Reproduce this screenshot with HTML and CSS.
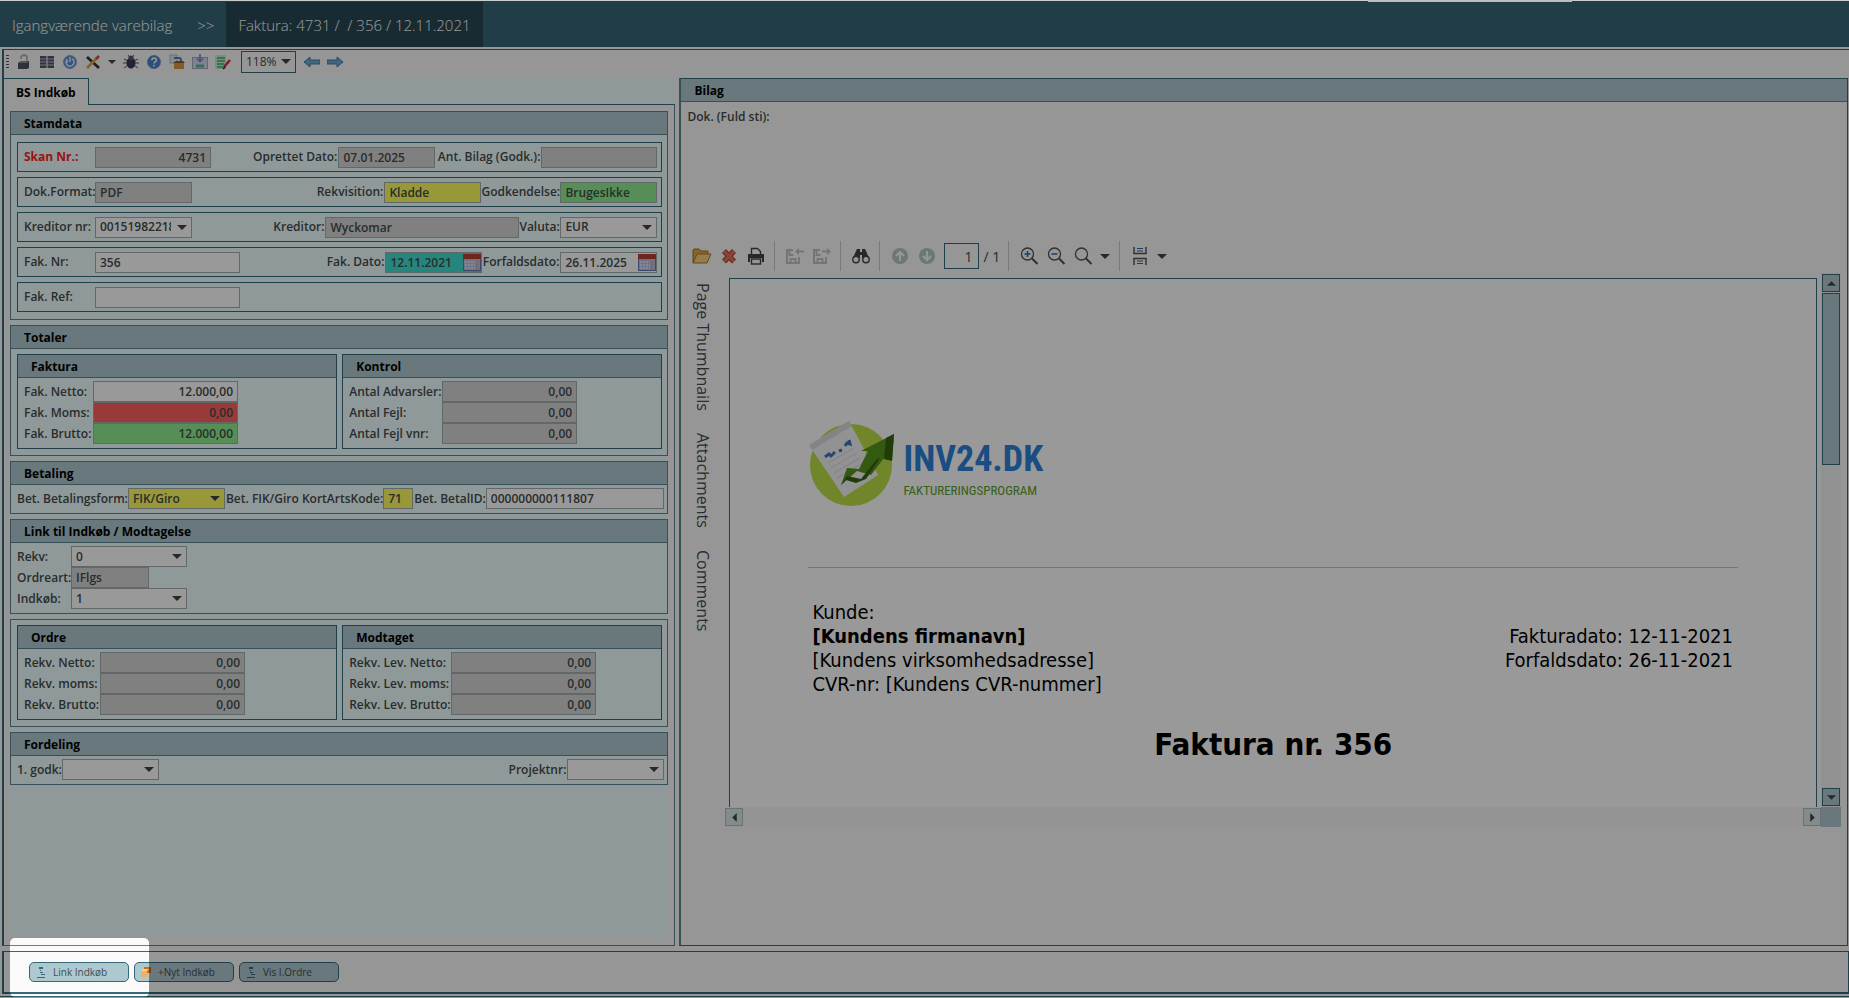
FILE: index.html
```html
<!DOCTYPE html>
<html lang="da">
<head>
<meta charset="utf-8">
<title>Faktura 4731</title>
<link rel="stylesheet" href="styles.css">
</head>
<body>
<div class="window-edge"><span class="window-notch"></span></div>
<nav class="crumbs">
  <a href="#" class="crumb">Igangværende varebilag</a>
  <span class="crumb-sep">&gt;&gt;</span>
  <a href="#" class="crumb crumb-active">Faktura: 4731 /&nbsp; / 356 / 12.11.2021</a>
</nav>

<main class="frame">
  <div class="toolbar">
    <span class="grip"></span>
    <button class="tool" aria-label="Lås op"><svg viewBox="0 0 16 16"><path d="M5 5V4a3 3 0 0 1 6 0v5" fill="none" stroke="#b4b4b4" stroke-width="1.800"/><path d="M2 9l3-2h8v7l-2 1H2z" fill="#50505f"/><path d="M2 9l3-2h8l-2 2z" fill="#8e8e9c"/></svg></button>
    <button class="tool" aria-label="Kolonner"><svg viewBox="0 0 16 16"><rect x="1" y="2" width="6.500" height="12" fill="#56566a"/><rect x="8.500" y="2" width="6.500" height="12" fill="#56566a"/><path d="M1 5h14M1 8h14M1 11h14" stroke="#d8d8e2" stroke-width=".8"/></svg></button>
    <button class="tool" aria-label="Opdater"><svg viewBox="0 0 16 16"><circle cx="8" cy="8" r="6.500" fill="#5c8cd0" stroke="#8ca8d4"/><path d="M5 5.500a4 4 0 1 0 5-.8M5 5v4M8 3v5" fill="none" stroke="#e8f2ff" stroke-width="1.500"/></svg></button>
    <button class="tool" aria-label="Værktøjer"><svg viewBox="0 0 16 16"><path d="M2 3l12 11" stroke="#343446" stroke-width="2.800"/><path d="M2 14L12 4" stroke="#d9a53c" stroke-width="2.600"/><path d="M11 5l3-3" stroke="#d8503c" stroke-width="2.600"/></svg></button>
    <button class="tool tool-caret" aria-label="Flere værktøjer"><span class="caret"></span></button>
    <button class="tool" aria-label="Fejlfinding"><svg viewBox="0 0 16 16"><path d="M1 5l4 2M15 5l-4 2M0 9h16M1 14l4-3M15 14l-4-3M5 1l2 3M11 1L9 4" stroke="#55556a"/><ellipse cx="8" cy="9" rx="4.500" ry="5.500" fill="#3c3c50"/><circle cx="8" cy="4" r="2.500" fill="#55556a"/></svg></button>
    <button class="tool" aria-label="Hjælp"><svg viewBox="0 0 16 16"><circle cx="8" cy="8" r="6.600" fill="#4c80cc" stroke="#84a4d4"/><path d="M5.800 6.200c0-3 4.600-2.800 4.600 0 0 1.500-2.300 1.500-2.300 3.200M8 10.800v1.800" fill="none" stroke="#fff" stroke-width="1.600"/></svg></button>
    <button class="tool" aria-label="Pak"><svg viewBox="0 0 16 16"><rect x="1" y="1" width="7" height="8" fill="#dfe8f4" stroke="#b4bccc"/><path d="M5 4h5a2 2 0 0 1 2 2v2" fill="none" stroke="#4f7fb8" stroke-width="2"/><path d="M5 9h10v6H5z" fill="#d89c40"/><path d="M4 9l3-2h7l2 2z" fill="#8c5a1c"/></svg></button>
    <button class="tool" aria-label="Gem"><svg viewBox="0 0 16 16"><rect x=".5" y="3.500" width="15" height="11" fill="#cfdcee" stroke="#a8a8c8"/><path d="M4 12h8" stroke="#60b498" stroke-width="3"/><path d="M8 0v7M5 4.500l3 3 3-3" fill="none" stroke="#8c80b8" stroke-width="1.600"/></svg></button>
    <button class="tool" aria-label="Rediger"><svg viewBox="0 0 16 16"><rect x="0" y="1" width="11" height="14" fill="#c6ecde"/><path d="M2 4h8M2 7h8M2 10h7M2 13h6" stroke="#3cb464" stroke-width="1.600"/><path d="M9 13L15 6" stroke="#d83048" stroke-width="2.600"/><path d="M8 15l2-2" stroke="#222" stroke-width="1.500"/></svg></button>
    <span class="select zoom-select"><select aria-label="Zoom"><option>118%</option></select></span>
    <button class="tool" aria-label="Tilbage"><svg viewBox="0 0 16 16"><path d="M0 8l6-5v3h10v4H6v3z" fill="#6cacd4" stroke="#4878a4"/></svg></button>
    <button class="tool" aria-label="Frem"><svg viewBox="0 0 16 16"><path d="M16 8l-6-5v3H0v4h10v3z" fill="#6cacd4" stroke="#4878a4"/></svg></button>
  </div>

  <div class="panes">
    <section class="pane-left">
      <div class="tabs"><button class="tab">BS Indkøb</button></div>
      <form class="sheet">
        <div class="cards">
          <section class="card">
            <h2 class="card-head">Stamdata</h2>
            <div class="rows">
              <div class="row">
                <label class="lead required" for="skan">Skan Nr.:</label><input id="skan" class="f116 ro num" value="4731" readonly>
                <label class="push" for="opr">Oprettet Dato:</label><input id="opr" class="f97 ro" value="07.01.2025" readonly>
                <label class="l106" for="ant">Ant. Bilag (Godk.):</label><input id="ant" class="f116 ro" readonly>
              </div>
              <div class="row">
                <label class="lead" for="fmt">Dok.Format:</label><input id="fmt" class="f97 ro" value="PDF" readonly>
                <label class="push" for="rek">Rekvisition:</label><input id="rek" class="f97 yellow" value="Kladde">
                <label class="l79" for="godk">Godkendelse:</label><input id="godk" class="f97 green" value="BrugesIkke">
              </div>
              <div class="row">
                <label class="lead" for="knr">Kreditor nr:</label><span class="select f97"><select id="knr"><option>00151982218</option></select></span>
                <label class="push" for="kre">Kreditor:</label><input id="kre" class="f194 ro" value="Wyckomar" readonly>
                <label class="l41" for="val">Valuta:</label><span class="select f97"><select id="val"><option>EUR</option></select></span>
              </div>
              <div class="row">
                <label class="lead" for="fnr">Fak. Nr:</label><input id="fnr" class="f145" value="356">
                <label class="push" for="fdato">Fak. Dato:</label><span class="date f97"><input id="fdato" class="teal" value="12.11.2021"><button type="button" class="cal" aria-label="Vælg fakturadato"><svg viewBox="0 0 18 17"><rect x=".5" y=".5" width="17" height="16" fill="#b8c0e0" stroke="#6878b4"/><rect width="18" height="5" fill="#b83c34"/><path d="M2 8h10M2 11h10M2 14h10" stroke="#e0e4f8" stroke-width="2" stroke-dasharray="2 1"/><path d="M14 7v8" stroke="#e8a090" stroke-width="2" stroke-dasharray="2 1"/></svg></button></span>
                <label class="l78" for="forf">Forfaldsdato:</label><span class="date f97"><input id="forf" value="26.11.2025"><button type="button" class="cal" aria-label="Vælg forfaldsdato"><svg viewBox="0 0 18 17"><rect x=".5" y=".5" width="17" height="16" fill="#b8c0e0" stroke="#6878b4"/><rect width="18" height="5" fill="#b83c34"/><path d="M2 8h10M2 11h10M2 14h10" stroke="#e0e4f8" stroke-width="2" stroke-dasharray="2 1"/><path d="M14 7v8" stroke="#e8a090" stroke-width="2" stroke-dasharray="2 1"/></svg></button></span>
              </div>
              <div class="row">
                <label class="lead" for="fref">Fak. Ref:</label><input id="fref" class="f145">
              </div>
            </div>
          </section>

          <section class="card">
            <h2 class="card-head">Totaler</h2>
            <div class="pair">
              <section class="card">
                <h3 class="card-head">Faktura</h3>
                <div class="stack cols-faktura">
                  <label for="fn">Fak. Netto:</label><input id="fn" class="f145 num" value="12.000,00">
                  <label for="fm">Fak. Moms:</label><input id="fm" class="f145 num red" value="0,00">
                  <label for="fb">Fak. Brutto:</label><input id="fb" class="f145 num green" value="12.000,00">
                </div>
              </section>
              <section class="card">
                <h3 class="card-head">Kontrol</h3>
                <div class="stack cols-kontrol">
                  <label for="aa">Antal Advarsler:</label><input id="aa" class="f135 ro num" value="0,00" readonly>
                  <label for="af">Antal Fejl:</label><input id="af" class="f135 ro num" value="0,00" readonly>
                  <label for="av">Antal Fejl vnr:</label><input id="av" class="f135 ro num" value="0,00" readonly>
                </div>
              </section>
            </div>
          </section>

          <section class="card">
            <h2 class="card-head">Betaling</h2>
            <div class="line">
              <label for="bf">Bet. Betalingsform:</label><span class="select f97"><select id="bf" class="yellow"><option>FIK/Giro</option></select></span>
              <label class="next" for="bk">Bet. FIK/Giro KortArtsKode:</label><input id="bk" class="f30 yellow" value="71">
              <label class="next" for="bi">Bet. BetalID:</label><input id="bi" class="grow" value="000000000111807">
            </div>
          </section>

          <section class="card">
            <h2 class="card-head">Link til Indkøb / Modtagelse</h2>
            <div class="stack cols-link">
              <label for="rv">Rekv:</label><span class="select f116"><select id="rv"><option>0</option></select></span>
              <label for="oa">Ordreart:</label><input id="oa" class="f78 ro" value="IFlgs" readonly>
              <label for="ik">Indkøb:</label><span class="select f116"><select id="ik"><option>1</option></select></span>
            </div>
          </section>

          <section class="card">
            <div class="pair">
              <section class="card">
                <h3 class="card-head">Ordre</h3>
                <div class="stack cols-ordre">
                  <label for="rn">Rekv. Netto:</label><input id="rn" class="f145 ro num" value="0,00" readonly>
                  <label for="rm">Rekv. moms:</label><input id="rm" class="f145 ro num" value="0,00" readonly>
                  <label for="rb">Rekv. Brutto:</label><input id="rb" class="f145 ro num" value="0,00" readonly>
                </div>
              </section>
              <section class="card">
                <h3 class="card-head">Modtaget</h3>
                <div class="stack cols-modtaget">
                  <label for="ln">Rekv. Lev. Netto:</label><input id="ln" class="f145 ro num" value="0,00" readonly>
                  <label for="lm">Rekv. Lev. moms:</label><input id="lm" class="f145 ro num" value="0,00" readonly>
                  <label for="lb">Rekv. Lev. Brutto:</label><input id="lb" class="f145 ro num" value="0,00" readonly>
                </div>
              </section>
            </div>
          </section>

          <section class="card">
            <h2 class="card-head">Fordeling</h2>
            <div class="line">
              <label for="g1">1. godk:</label><span class="select f97"><select id="g1"><option></option></select></span>
              <label class="push" for="pn">Projektnr:</label><span class="select f97"><select id="pn"><option></option></select></span>
            </div>
          </section>
        </div>
      </form>
    </section>

    <section class="pane-right">
      <h2 class="card-head">Bilag</h2>
      <p class="doc-path">Dok. (Fuld sti):</p>
      <div class="viewer-tools">
        <button class="vt" aria-label="Åbn"><svg viewBox="0 0 20 18"><path d="M1 16V3l1-1h5l2 2h7v3" fill="#dca64c" stroke="#a87020"/><path d="M1 16L5 7h14l-4 9z" fill="#f8cf80" stroke="#b07828"/></svg></button>
        <button class="vt" aria-label="Luk"><svg viewBox="0 0 20 18"><path d="M5 4l10 10.500M15 4L5 14.500" stroke="#a83c30" stroke-width="5.500"/><path d="M5 4l10 10.500M15 4L5 14.500" stroke="#e8705c" stroke-width="3.500"/></svg></button>
        <button class="vt" aria-label="Udskriv"><svg viewBox="0 0 20 18"><path d="M5.500 7V1.500h6l3 3V7" fill="#fafafa" stroke="#444" stroke-width="1.400"/><path d="M2 7h16v8h-2v-4H4v4H2z" fill="#444"/><rect x="5.500" y="12" width="9" height="5" fill="#fafafa" stroke="#444" stroke-width="1.400"/></svg></button>
        <span class="vsep"></span>
        <button class="vt" aria-label="Importer"><svg viewBox="0 0 20 18"><path d="M8 3H2v13h12v-6M4.500 3v5h4M5.500 16v-4h5v4" fill="none" stroke="#c4c4c4" stroke-width="2"/><path d="M10 4.500l4-3.500v2.500h5v2h-5V8z" fill="#b4c8c4"/></svg></button>
        <button class="vt" aria-label="Eksporter"><svg viewBox="0 0 20 18"><path d="M8 3H2v13h12v-6M4.500 3v5h4M5.500 16v-4h5v4" fill="none" stroke="#c4c4c4" stroke-width="2"/><path d="M19 4.500L15 1v2.500h-5v2h5V8z" fill="#b4c8c4"/></svg></button>
        <span class="vsep"></span>
        <button class="vt" aria-label="Søg"><svg viewBox="0 0 20 18"><path d="M5 4l1-2h3v9H2zM15 4l-1-2h-3v9h7z" fill="#444"/><rect x="8" y="5" width="4" height="3" fill="#444"/><circle cx="5" cy="12.500" r="3.200" fill="#fafafa" stroke="#444" stroke-width="1.400"/><circle cx="15" cy="12.500" r="3.200" fill="#fafafa" stroke="#444" stroke-width="1.400"/></svg></button>
        <span class="vsep"></span>
        <button class="vt" aria-label="Forrige side"><svg viewBox="0 0 20 18"><circle cx="10" cy="9" r="8" fill="#b4c8c4"/><path d="M10 14V5M6 9l4-4 4 4" fill="none" stroke="#fafafa" stroke-width="2"/></svg></button>
        <button class="vt" aria-label="Næste side"><svg viewBox="0 0 20 18"><circle cx="10" cy="9" r="8" fill="#b4c8c4"/><path d="M10 4v9M6 9l4 4 4-4" fill="none" stroke="#fafafa" stroke-width="2"/></svg></button>
        <input class="page-no" aria-label="Side" value="1"><span class="page-total">/ 1</span>
        <span class="vsep"></span>
        <button class="vt" aria-label="Zoom ind"><svg viewBox="0 0 20 18"><circle cx="8.500" cy="7" r="6" fill="none" stroke="#505050" stroke-width="1.300"/><path d="M13 11.500l5.500 5.500" stroke="#505050" stroke-width="2"/><path d="M5.500 7h6M8.500 4v6" stroke="#2c64ac" stroke-width="1.500"/></svg></button>
        <button class="vt" aria-label="Zoom ud"><svg viewBox="0 0 20 18"><circle cx="8.500" cy="7" r="6" fill="none" stroke="#505050" stroke-width="1.300"/><path d="M13 11.500l5.500 5.500" stroke="#505050" stroke-width="2"/><path d="M5.500 7h6" stroke="#2c64ac" stroke-width="1.500"/></svg></button>
        <button class="vt" aria-label="Zoom"><svg viewBox="0 0 20 18"><circle cx="8.500" cy="7" r="6" fill="none" stroke="#505050" stroke-width="1.300"/><path d="M13 11.500l5.500 5.500" stroke="#505050" stroke-width="2"/></svg></button>
        <button class="vt-caret" aria-label="Zoomniveau"><span class="caret"></span></button>
        <span class="vsep"></span>
        <button class="vt" aria-label="Sidevisning"><svg viewBox="0 0 20 18"><path d="M4 0v6.500h12V0M4 18v-6.500h12V18" fill="none" stroke="#505050" stroke-width="1.400"/><path d="M7 1.500h6M7 4h6M7 14h6M7 16.500h6" stroke="#2c64ac" stroke-width="1.200"/></svg></button>
        <button class="vt-caret" aria-label="Vælg sidevisning"><span class="caret"></span></button>
      </div>
      <div class="viewer">
        <div class="side-tabs">
          <button>Page Thumbnails</button><button>Attachments</button><button>Comments</button>
        </div>
        <div class="doc">
          <article class="paper">
            <div class="brand">
              <svg class="brand-mark" viewBox="0 0 88 88" role="img" aria-label="INV24.DK">
                <circle cx="43" cy="46" r="41" fill="#bce048"/>
                <path d="M1 26L41 2l29 54-34 22z" fill="#f4f4f6"/>
                <path d="M1 26L41 2l3 5L4 31z" fill="#dcdce2"/>
                <path d="M17 38l4-3 2 2 4-4M31 32l3-1M37 27l2-3 3 1-1-4" fill="none" stroke="#3c78c0" stroke-width="3"/>
                <path d="M20 44l26-15M23 49l26-15M26 54l26-15M29 59l26-15" stroke="#d8d8de"/>
                <path d="M33 66l6-17 12 1 9-18-7 0 33-17-2 27-8-3-13 17-14-4z" fill="#58941c"/>
                <path d="M33 66l6-9 14 3 16-20 3-1-14 21-10 4-10-3zM78 19l8-4-2 27-8-2z" fill="#356410"/>
              </svg>
              <div class="brand-words"><span class="brand-name">INV24.DK</span><span class="brand-sub">FAKTURERINGSPROGRAM</span></div>
            </div>
            <hr>
            <div class="parties">
              <p>Kunde:<br><b>[Kundens firmanavn]</b><br>[Kundens virksomhedsadresse]<br>CVR-nr: [Kundens CVR-nummer]</p>
              <p class="dates">Fakturadato: 12-11-2021<br>Forfaldsdato: 26-11-2021</p>
            </div>
            <h1>Faktura nr. 356</h1>
          </article>
          <div class="hscroll">
            <button class="sb pale" aria-label="Rul til venstre"><svg viewBox="0 0 8 8"><path d="M6 0v8L2 4z"/></svg></button>
            <button class="sb pale" aria-label="Rul til højre"><svg viewBox="0 0 8 8"><path d="M2 0v8l4-4z"/></svg></button>
          </div>
        </div>
        <div class="vscroll">
          <button class="sb" aria-label="Rul op"><svg viewBox="0 0 8 8"><path d="M0 6h8L4 2z"/></svg></button>
          <span class="thumb"></span>
          <button class="sb down" aria-label="Rul ned"><svg viewBox="0 0 8 8"><path d="M0 2h8L4 6z"/></svg></button>
          <span class="corner"></span>
        </div>
      </div>
    </section>
  </div>
</main>

<footer class="actions">
  <div class="spot-anchor">
    <button class="action"><svg viewBox="0 0 10 12"><path d="M3 1h4v2H3zM4 4h1v1H4zM4 6h3v1H4zM5 8h4v1H5zM1 11h8v1H1z" fill="#35697a"/></svg>Link Indkøb</button>
    <span class="spotlight"></span>
  </div>
  <button class="action"><svg viewBox="0 0 10 12"><path d="M3 1h7v6H3z" fill="#c07020"/><path d="M0 5h6v6H0z" fill="#f0b060"/><path d="M0 5l2-2h6l-2 2z" fill="#ffd090"/></svg>+Nyt Indkøb</button>
  <button class="action"><svg viewBox="0 0 10 12"><path d="M3 1h4v2H3zM4 4h1v1H4zM4 6h3v1H4zM5 8h4v1H5zM1 11h8v1H1z" fill="#35697a"/></svg>Vis I.Ordre</button>
</footer>
<div class="bottom-edge"></div>
</body>
</html>
```

FILE: styles.css
```css
:root {
  --line: #35697a;
  --soft-line: #5c8592;
  --head: #adc8cf;
  --azure: #f0ffff;
  --page: #fafafa;
  --ink: #444c4c;
  --ui: "Open Sans", "Noto Sans", sans-serif;
}
* { box-sizing: border-box; }
body {
  margin: 0;
  min-height: 100vh;
  display: flex;
  flex-direction: column;
  background: var(--page);
  color: var(--ink);
  font: 600 12px/14px var(--ui);
}
h1, h2, h3, p { margin: 0; }
button, input, select { font: inherit; color: inherit; margin: 0; }
button { padding: 0; border: 0; background: none; }
label { white-space: nowrap; }

.window-edge { position: relative; z-index: 3; height: 1px; background: #c8cccc; }
.window-notch { position: absolute; left: 74%; width: 11%; height: 2px; background: #bdbdbd; }

/* Breadcrumbs */
.crumbs {
  display: flex;
  align-items: stretch;
  height: 46px;
  padding: 1px 0 0 12px;
  background: #386878;
  color: #fff;
  font: 300 15px/46px var(--ui);
}
.crumb { height: 45px; color: inherit; text-decoration: none; white-space: nowrap; }
.crumb-sep { height: 45px; padding: 0 12px 0 25px; }
.crumb-active { padding: 0 12px; background: #284955; }

/* Frame and top toolbar */
.frame {
  flex: 1;
  display: flex;
  flex-direction: column;
  margin: 2px 0 0 2px;
  border-top: 1px solid var(--line);
  border-left: 2px solid var(--line);
}
.toolbar { display: flex; align-items: center; height: 28px; padding: 0 2px 4px; }
.grip { width: 3px; height: 15px; margin-right: 3px; background: repeating-linear-gradient(#555 0 1px, transparent 1px 3px); }
.tool { width: 23px; height: 22px; display: grid; place-items: center; }
.tool svg { width: 16px; height: 16px; }
.tool-caret { width: 15px; }
.caret { display: block; border: 4px solid transparent; border-top-color: #444; border-bottom: 0; }

/* Fields */
input, select {
  height: 21px;
  min-width: 0;
  padding: 0 4px;
  border: 1px solid #a4acac;
  border-radius: 0;
  background: #fff;
}
select { appearance: none; width: 100%; padding-right: 20px; display: block; }
.select, .date { position: relative; display: block; flex: none; }
.select::after {
  content: "";
  position: absolute;
  right: 5px;
  top: 8px;
  border: 5px solid transparent;
  border-top-color: #444;
  border-bottom: 0;
  pointer-events: none;
}
.zoom-select { width: 55px; margin: 0 4px 0 7px; }
.zoom-select select { height: 22px; padding-right: 12px; border-color: var(--line); background: var(--page); font-weight: 400; }
.date input { width: 100%; display: block; }
.cal { position: absolute; right: 1px; top: 2px; width: 18px; height: 17px; }
.cal svg { display: block; }
.ro { background: #d6d6d6; }
.yellow { background: #fdfd5e; }
.green { background: #90ee90; }
.red { background: #ff6060; }
.teal { background: #40e0d0; }
.num { text-align: right; }
.grow { flex: 1; }
.f30 { width: 30px; }
.f78 { width: 78px; }
.f97 { width: 97px; }
.f116 { width: 116px; }
.f135 { width: 135px; }
.f145 { width: 145px; }
.f194 { width: 194px; }

/* Left pane */
.panes { flex: 1; display: grid; grid-template-columns: 31fr 54fr; gap: 4px; }
.pane-left { display: flex; flex-direction: column; margin-left: -1px; }
.tabs { height: 27px; display: flex; background: var(--azure); border-bottom: 1px solid var(--line); }
.tab {
  height: 27px;
  padding: 1px 12px 0;
  border: 1px solid var(--line);
  border-bottom: 0;
  background: var(--page);
  color: #000;
  font-weight: 700;
}
.sheet { flex: 1; display: flex; flex-direction: column; padding: 6px 6px 8px 7px; border: 1px solid var(--soft-line); border-top: 0; border-left: 0; }
.cards { flex: 1; display: flex; flex-direction: column; gap: 5px; background: var(--azure); }
.card { border: 1px solid var(--soft-line); background: var(--azure); }
.card-head {
  height: 23px;
  padding: 0 13px;
  border-bottom: 1px solid var(--soft-line);
  background: var(--head);
  color: #000;
  font: 700 12px/23px var(--ui);
}
.rows { display: flex; flex-direction: column; gap: 5px; padding: 7px 5px 7px 6px; }
.row { display: flex; align-items: center; height: 30px; padding: 0 4px 0 6px; border: 1px solid var(--line); }
.lead { width: 71px; }
.required { color: #ff1e1e; font-weight: 700; }
.push { margin-left: auto; padding-right: 1px; }
.l41, .l78, .l79, .l106 { text-align: right; padding-right: 1px; }
.l41 { width: 41px; }
.l78 { width: 78px; }
.l79 { width: 79px; }
.l106 { width: 106px; }
.pair { display: grid; grid-template-columns: 1fr 1fr; gap: 5px; padding: 5px 5px 6px 6px; }
.pair .card { border-color: var(--line); }
.stack { display: grid; align-items: center; justify-content: start; padding: 3px 6px 4px; }
.cols-faktura { grid-template-columns: 69px auto; }
.cols-kontrol { grid-template-columns: 93px auto; }
.cols-link { grid-template-columns: 54px auto; }
.cols-ordre { grid-template-columns: 76px auto; }
.cols-modtaget { grid-template-columns: 102px auto; }
.line { display: flex; align-items: center; padding: 3px 3px 4px 6px; }
.next { padding-left: 1px; }

/* Right pane */
.pane-right { display: flex; flex-direction: column; margin-right: 1px; border: 1px solid var(--line); border-left: 2px solid var(--soft-line); }
.doc-path { height: 137px; padding: 8px 6px; }
.viewer-tools { display: flex; align-items: center; height: 34px; padding-left: 7px; }
.vt { width: 27px; height: 26px; display: grid; place-items: center; }
.vt svg { width: 20px; height: 18px; }
.vt-caret { width: 18px; height: 26px; display: grid; place-items: center; }
.viewer-tools .caret { border-width: 5px 5px 0; }
.vsep { width: 1px; height: 30px; margin: 0 6px 0 5px; background: #ccc; }
.page-no { width: 35px; height: 26px; margin: 0 4px; border-color: var(--line); text-align: right; font: 400 14px var(--ui); padding: 0 6px; background: var(--page); }
.page-total { width: 20px; font: 400 14px var(--ui); white-space: nowrap; }
.viewer { flex: 1; display: grid; grid-template-columns: 44px 1fr 20px; padding-right: 6px; margin-bottom: 118px; }
.side-tabs { display: flex; flex-direction: column; align-items: center; gap: 22px; padding-top: 10px; }
.side-tabs button { writing-mode: vertical-rl; font: 400 16px/20px var(--ui); white-space: nowrap; }
.doc { display: flex; flex-direction: column; padding-top: 5px; }
.paper {
  flex: 1;
  margin: 0 4px;
  padding: 140px 78px 0;
  border: 1px solid var(--line);
  border-bottom: 0;
  background: #fff;
  color: #000;
  font: 400 20px/24px "DejaVu Sans Condensed", "DejaVu Sans", sans-serif;
}
.brand { display: flex; align-items: flex-start; gap: 7px; height: 88px; }
.brand-mark { width: 88px; height: 88px; }
.brand-words { display: flex; flex-direction: column; padding-top: 17px; font-family: "Roboto Condensed", "Liberation Sans Narrow", "Liberation Sans", sans-serif; }
.brand-name { color: #2c80d8; font-size: 36px; font-weight: 700; line-height: 46px; }
.brand-sub { color: #5aa028; font-size: 13px; line-height: 18px; }
.paper hr { margin: 60px 0 0; border: 0; border-top: 1px solid #c4c4c4; }
.parties { display: flex; justify-content: space-between; padding: 32px 5px 0 4px; }
.dates { padding-top: 24px; text-align: right; }
.paper h1 { margin-top: 30px; text-align: center; font: 700 31px/36px "DejaVu Sans Condensed", "DejaVu Sans", sans-serif; }
.hscroll { display: flex; justify-content: space-between; height: 20px; padding-top: 1px; background: #f7f7f7; }
.sb { width: 18px; height: 18px; display: grid; place-items: center; border: 1px solid var(--line); background: var(--head); }
.sb svg { width: 9px; height: 9px; fill: #444; }
.pale { border-color: #a8c0c4; background: #dce8ea; }
.vscroll { display: flex; flex-direction: column; align-items: center; gap: 1px; padding-top: 1px; background: #f2f2f2; }
.thumb { width: 18px; height: 172px; border: 1px solid var(--line); background: var(--head); }
.down { margin-top: auto; }
.corner { width: 20px; height: 20px; background: var(--head); }

/* Bottom actions */
.actions {
  display: flex;
  gap: 5px;
  margin: 5px 0 2px 2px;
  padding: 10px 25px;
  border: solid var(--line);
  border-width: 1px 1px 2px 2px;
}
.action {
  display: flex;
  align-items: center;
  gap: 7px;
  width: 100px;
  height: 20px;
  padding-left: 6px;
  border: 1px solid var(--line);
  border-radius: 5px;
  background: var(--head);
  font-weight: 400;
  font-size: 10px;
  white-space: nowrap;
}
.action svg { width: 10px; height: 12px; }
.spot-anchor { position: relative; }
/* Guided-tour highlight: everything outside the box is dimmed */
.spotlight {
  position: absolute;
  z-index: 2;
  inset: -24px -20px -15px -19px;
  border-radius: 5px;
  box-shadow: 0 0 0 3000px rgba(0, 0, 0, 0.4);
  pointer-events: none;
}
.bottom-edge { height: 2px; border-top: 1px solid var(--line); }
```
